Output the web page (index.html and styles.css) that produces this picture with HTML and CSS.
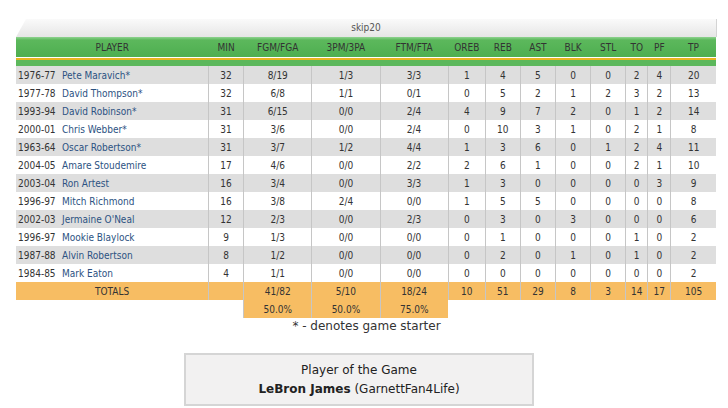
FILE: index.html
```html
<!DOCTYPE html>
<html lang="en">
<head>
    <meta charset="UTF-8">
    <title>Box Score</title>
    <link rel="stylesheet" href="styles.css">
</head>
<body>
    <div class="boxscore">
        <div class="title">skip20</div>
        <table class="stats">
            <colgroup>
                <col class="c-player"><col class="c-min"><col class="c-wide"><col class="c-wide"><col class="c-wide">
                <col class="c-oreb"><col class="c-mid"><col class="c-mid"><col class="c-mid"><col class="c-mid">
                <col class="c-to"><col class="c-pf"><col class="c-tp">
            </colgroup>
            <thead>
                <tr class="head">
                    <th>PLAYER</th><th>MIN</th><th>FGM/FGA</th><th>3PM/3PA</th><th>FTM/FTA</th><th>OREB</th><th>REB</th><th>AST</th><th>BLK</th><th>STL</th><th>TO</th><th>PF</th><th>TP</th>
                </tr>
                <tr class="stripe"><td colspan="13"></td></tr>
            </thead>
            <tbody>
                <tr><td class="name"><span class="yr">1976-77</span><a href="#">Pete Maravich*</a></td><td>32</td><td>8/19</td><td>1/3</td><td>3/3</td><td>1</td><td>4</td><td>5</td><td>0</td><td>0</td><td>2</td><td>4</td><td>20</td></tr>
                <tr><td class="name"><span class="yr">1977-78</span><a href="#">David Thompson*</a></td><td>32</td><td>6/8</td><td>1/1</td><td>0/1</td><td>0</td><td>5</td><td>2</td><td>1</td><td>2</td><td>3</td><td>2</td><td>13</td></tr>
                <tr><td class="name"><span class="yr">1993-94</span><a href="#">David Robinson*</a></td><td>31</td><td>6/15</td><td>0/0</td><td>2/4</td><td>4</td><td>9</td><td>7</td><td>2</td><td>0</td><td>1</td><td>2</td><td>14</td></tr>
                <tr><td class="name"><span class="yr">2000-01</span><a href="#">Chris Webber*</a></td><td>31</td><td>3/6</td><td>0/0</td><td>2/4</td><td>0</td><td>10</td><td>3</td><td>1</td><td>0</td><td>2</td><td>1</td><td>8</td></tr>
                <tr><td class="name"><span class="yr">1963-64</span><a href="#">Oscar Robertson*</a></td><td>31</td><td>3/7</td><td>1/2</td><td>4/4</td><td>1</td><td>3</td><td>6</td><td>0</td><td>1</td><td>2</td><td>4</td><td>11</td></tr>
                <tr><td class="name"><span class="yr">2004-05</span><a href="#">Amare Stoudemire</a></td><td>17</td><td>4/6</td><td>0/0</td><td>2/2</td><td>2</td><td>6</td><td>1</td><td>0</td><td>0</td><td>2</td><td>1</td><td>10</td></tr>
                <tr><td class="name"><span class="yr">2003-04</span><a href="#">Ron Artest</a></td><td>16</td><td>3/4</td><td>0/0</td><td>3/3</td><td>1</td><td>3</td><td>0</td><td>0</td><td>0</td><td>0</td><td>3</td><td>9</td></tr>
                <tr><td class="name"><span class="yr">1996-97</span><a href="#">Mitch Richmond</a></td><td>16</td><td>3/8</td><td>2/4</td><td>0/0</td><td>1</td><td>5</td><td>5</td><td>0</td><td>0</td><td>0</td><td>0</td><td>8</td></tr>
                <tr><td class="name"><span class="yr">2002-03</span><a href="#">Jermaine O'Neal</a></td><td>12</td><td>2/3</td><td>0/0</td><td>2/3</td><td>0</td><td>3</td><td>0</td><td>3</td><td>0</td><td>0</td><td>0</td><td>6</td></tr>
                <tr><td class="name"><span class="yr">1996-97</span><a href="#">Mookie Blaylock</a></td><td>9</td><td>1/3</td><td>0/0</td><td>0/0</td><td>0</td><td>1</td><td>0</td><td>0</td><td>0</td><td>1</td><td>0</td><td>2</td></tr>
                <tr><td class="name"><span class="yr">1987-88</span><a href="#">Alvin Robertson</a></td><td>8</td><td>1/2</td><td>0/0</td><td>0/0</td><td>0</td><td>2</td><td>0</td><td>1</td><td>0</td><td>1</td><td>0</td><td>2</td></tr>
                <tr><td class="name"><span class="yr">1984-85</span><a href="#">Mark Eaton</a></td><td>4</td><td>1/1</td><td>0/0</td><td>0/0</td><td>0</td><td>0</td><td>0</td><td>0</td><td>0</td><td>0</td><td>0</td><td>2</td></tr>
            </tbody>
            <tfoot>
                <tr class="totals">
                    <td>TOTALS</td><td></td><td>41/82</td><td>5/10</td><td>18/24</td><td>10</td><td>51</td><td>29</td><td>8</td><td>3</td><td>14</td><td>17</td><td>105</td>
                </tr>
                <tr class="pct">
                    <td class="blank"></td><td class="blank"></td><td>50.0%</td><td>50.0%</td><td>75.0%</td><td class="blank" colspan="8"></td>
                </tr>
            </tfoot>
        </table>
        <p class="note">* - denotes game starter</p>
    </div>

    <div class="potg">
        <div>Player of the Game</div>
        <div><b>LeBron James</b> (GarnettFan4Life)</div>
    </div>
</body>
</html>
```

FILE: styles.css
```css
*{
    margin: 0;
    padding: 0;
}
body{
    background: #fff;
    color: #333;
    font-family: "DejaVu Sans Condensed", "DejaVu Sans", Verdana, sans-serif;
    font-stretch: condensed;
    padding: 19px 12px 0 16px;
}

/*标题栏*/
.boxscore{
    width: 701px;
}
.title{
    height: 18px;
    line-height: 18px;
    text-align: center;
    font-size: 10px;
    color: #555;
    background: linear-gradient(#fafafa, #e6e6e6);
    border-right: 1px solid #d4d4d4;
    clip-path: polygon(10px 0, 100% 0, 100% 100%, 0 100%);
}

/*表格*/
.stats{
    width: 700px;
    border-collapse: collapse;
    table-layout: fixed;
    font-size: 10px;
}
.c-player{ width: 192px; }
.c-min{ width: 35px; }
.c-wide{ width: 68px; }
.c-oreb{ width: 37px; }
.c-mid{ width: 35px; }
.c-to{ width: 22px; }
.c-pf{ width: 23px; }
.c-tp{ width: 45px; }

.stats tr{
    height: 18px;
}
.stats th{
    height: 20px;
    padding: 0;
    font-weight: normal;
    color: #333;
    background: linear-gradient(#8fd390 0, #5cb85c 3px, #4eae50 100%);
}
.stats .stripe{
    height: 9px;
}
.stats .stripe td{
    height: 9px;
    padding: 0;
    background: #5cb85c;
    box-shadow: inset 0 1px 0 #fff, inset 0 3px 0 #e8b520;
}
.stats td{
    height: 18px;
    padding: 0;
    text-align: center;
    border-left: 1px solid #c6c6c6;
}
.stats td:first-child{
    border-left: 0;
}
.stats tbody tr:nth-child(odd) td{
    background: #dedede;
}
.stats td.name{
    text-align: left;
    padding-left: 2px;
    white-space: nowrap;
}
.yr{
    display: inline-block;
    width: 44px;
}
.name a{
    color: #2c5282;
    text-decoration: none;
}

/*合计*/
.totals td{
    background: #f7bd63;
}
.pct td{
    background: #f7bd63;
}
.pct td.blank{
    background: none;
    border-left: 0;
}
.note{
    text-align: center;
    font-family: "DejaVu Sans", Verdana, sans-serif;
    font-stretch: normal;
    font-size: 12px;
    line-height: 16px;
}

/*最佳球员*/
.potg{
    width: 346px;
    margin: 19px 0 0 168px;
    padding: 6px 0 5px;
    background: #f2f1f1;
    border: 2px solid #d5d5d5;
    text-align: center;
    font-family: "DejaVu Sans", Verdana, sans-serif;
    font-stretch: normal;
    font-size: 12px;
    line-height: 19px;
    color: #222;
}
```
